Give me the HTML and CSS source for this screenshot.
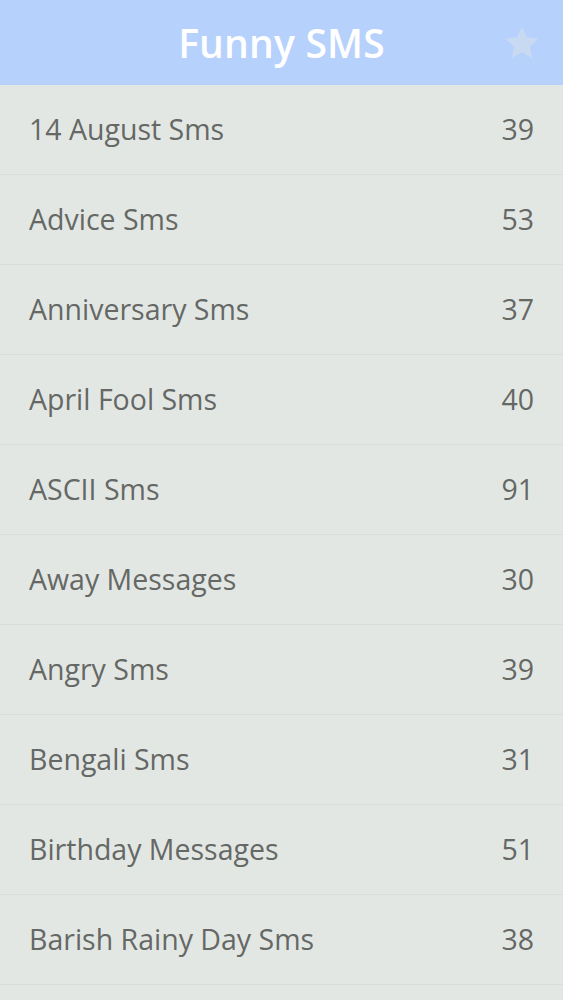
FILE: index.html
```html
<!DOCTYPE html>
<html>
<head>
<meta charset="utf-8">
<link rel="stylesheet" href="styles.css">
</head>
<body>
<header class="topbar">
  <h1 class="title">Funny SMS</h1>
  <svg class="star" viewBox="0 0 24 24" width="38" height="38"><path d="M12 1.8l3.1 6.6 7.2.9-5.3 5 1.4 7.1L12 17.9l-6.4 3.5 1.4-7.1-5.3-5 7.2-.9z"/></svg>
</header>
<ul class="list">
  <li class="row"><span class="name">14 August Sms</span><span class="count">39</span></li>
  <li class="row"><span class="name">Advice Sms</span><span class="count">53</span></li>
  <li class="row"><span class="name">Anniversary Sms</span><span class="count">37</span></li>
  <li class="row"><span class="name">April Fool Sms</span><span class="count">40</span></li>
  <li class="row"><span class="name">ASCII Sms</span><span class="count">91</span></li>
  <li class="row"><span class="name">Away Messages</span><span class="count">30</span></li>
  <li class="row"><span class="name">Angry Sms</span><span class="count">39</span></li>
  <li class="row"><span class="name">Bengali Sms</span><span class="count">31</span></li>
  <li class="row"><span class="name">Birthday Messages</span><span class="count">51</span></li>
  <li class="row"><span class="name">Barish Rainy Day Sms</span><span class="count">38</span></li>
</ul>
</body>
</html>
```
FILE: styles.css
```css
html, body {
  margin: 0;
  padding: 0;
  background: #e3e7e4;
  font-family: "Open Sans", "Noto Sans", sans-serif;
}
.topbar {
  position: relative;
  height: 85px;
  background: #b7d1fd;
  display: flex;
  align-items: center;
  justify-content: center;
}
.title {
  margin: 0;
  color: #ffffff;
  font-size: 39px;
  font-weight: 600;
  letter-spacing: 0.2px;
}
.star {
  position: absolute;
  right: 22px;
  top: 24px;
  fill: #c8d9f2;
}
.list {
  list-style: none;
  margin: 0;
  padding: 0;
}
.row {
  height: 89px;
  border-bottom: 1px solid #d8ddda;
  display: flex;
  align-items: center;
  justify-content: space-between;
  padding: 0 29px 0 29px;
  color: #656865;
  font-size: 28.5px;
}
.name, .count {
  line-height: 1;
}
```
